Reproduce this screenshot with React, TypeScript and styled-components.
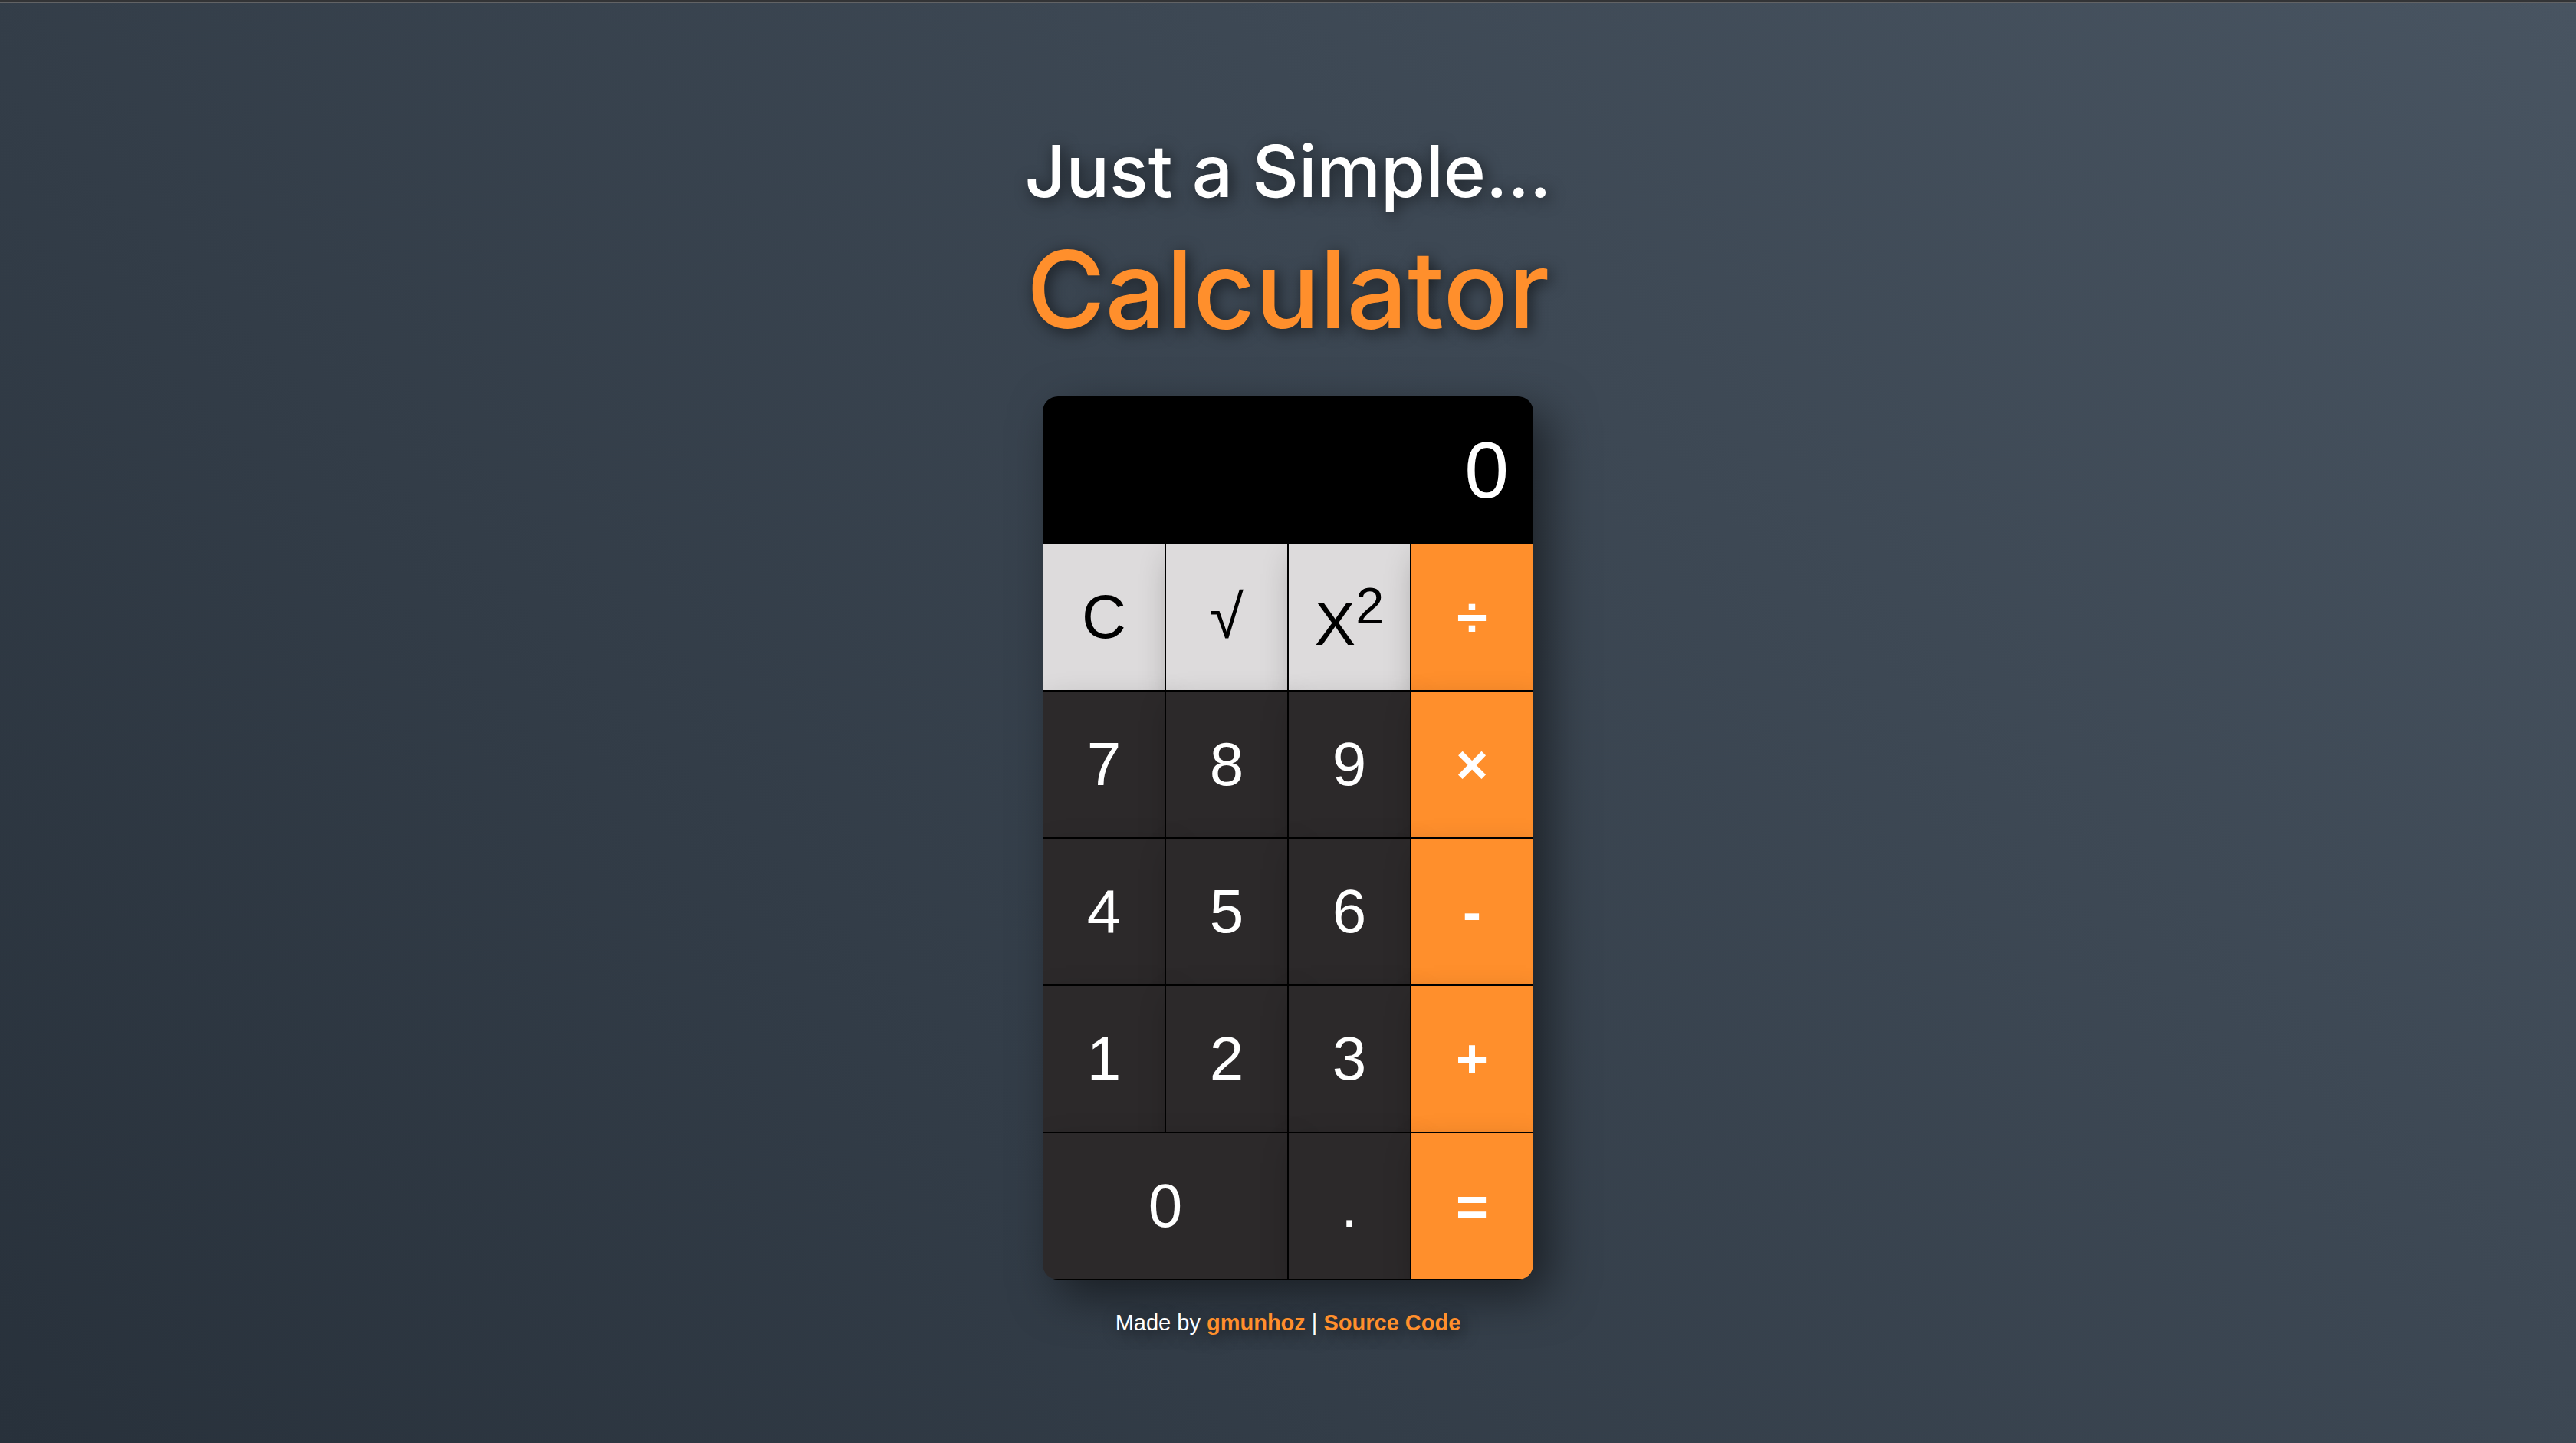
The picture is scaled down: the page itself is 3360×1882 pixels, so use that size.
import React, { useState } from "react";
import styled, { createGlobalStyle, css } from "styled-components";

const ORANGE = "#ff8f2c";

const GlobalStyle = createGlobalStyle`
  *, *::before, *::after { box-sizing: border-box; }
  html, body, #root { margin: 0; min-height: 100vh; }
  body { font-family: "Liberation Sans", Arial, sans-serif; }
`;

const Page = styled.div`
  min-height: 100vh;
  display: flex;
  flex-direction: column;
  align-items: center;
  padding: 163px 32px 64px;
  border-top: 2px solid #333436;
  box-shadow: inset 0 2px 0 #626365;
  color: #fff;
  background: linear-gradient(225deg, #485461 0%, #28313b 100%);
  background-origin: border-box;
`;

const Heading = styled.h1`
  margin: 0 0 44px;
  display: flex;
  flex-direction: column;
  align-items: center;
  font-family: Inter, sans-serif;
  font-weight: 500;
  text-shadow: 4px 4px 20px rgba(0, 0, 0, 0.6);
`;

const Lead = styled.span`
  font-size: 94px;
  line-height: 116px;
`;

const Name = styled.span`
  font-size: 140px;
  line-height: 192px;
  color: ${ORANGE};
`;

const CalculatorShadow = styled.main`
  border-radius: 20px;
  box-shadow: 20px 20px 60px rgba(0, 0, 0, 0.5);
`;

const Calculator = styled.div`
  width: 640px;
  max-width: 100%;
  display: grid;
  grid-template-columns: repeat(4, 1fr);
  grid-auto-rows: 192px;
  border-radius: 20px;
  overflow: hidden;
`;

const Display = styled.output`
  grid-column: 1 / -1;
  display: flex;
  align-items: center;
  justify-content: flex-end;
  padding: 0 32px;
  overflow: hidden;
  background: #000;
  font-size: 104px;
`;

type Tone = "digit" | "light" | "operator";

const tones = {
  digit: css`
    background: #2c292a;
    color: #fff;
    font-size: 80px;
  `,
  light: css`
    background: #dddbdc;
    color: #000;
    font-size: 80px;
  `,
  operator: css`
    background: ${ORANGE};
    color: #fff;
    font-size: 72px;
    font-weight: 700;
  `,
};

const Key = styled.button<{ $tone: Tone; $wide?: boolean }>`
  grid-column: span ${(p) => (p.$wide ? 2 : 1)};
  padding: 0;
  border: 1px solid #000;
  font-family: inherit;
  line-height: 1;
  cursor: pointer;
  box-shadow: 10px 20px 40px rgba(0, 0, 0, 0.3);
  ${(p) => tones[p.$tone]}
`;

const Footer = styled.footer`
  margin-top: 40px;
  font-size: 29px;
  line-height: 32px;
  text-shadow: 4px 4px 20px rgba(0, 0, 0, 0.6);
`;

const Link = styled.a`
  color: ${ORANGE};
  font-weight: 700;
  text-decoration: none;
`;

type KeySpec = { id: string; label: React.ReactNode; tone: Tone; wide?: boolean; name?: string };

const keys: KeySpec[] = [
  { id: "C", label: "C", tone: "light" },
  { id: "sqrt", label: "√", tone: "light", name: "Square root" },
  { id: "sq", label: <>X<sup>2</sup></>, tone: "light" },
  { id: "÷", label: "÷", tone: "operator" },
  { id: "7", label: "7", tone: "digit" },
  { id: "8", label: "8", tone: "digit" },
  { id: "9", label: "9", tone: "digit" },
  { id: "×", label: "×", tone: "operator" },
  { id: "4", label: "4", tone: "digit" },
  { id: "5", label: "5", tone: "digit" },
  { id: "6", label: "6", tone: "digit" },
  { id: "-", label: "-", tone: "operator" },
  { id: "1", label: "1", tone: "digit" },
  { id: "2", label: "2", tone: "digit" },
  { id: "3", label: "3", tone: "digit" },
  { id: "+", label: "+", tone: "operator" },
  { id: "0", label: "0", tone: "digit", wide: true },
  { id: ".", label: ".", tone: "digit" },
  { id: "=", label: "=", tone: "operator" },
];

const apply = (a: number, b: number, op: string) =>
  op === "÷" ? a / b : op === "×" ? a * b : op === "-" ? a - b : a + b;

export default function App() {
  const [value, setValue] = useState("0");
  const [stored, setStored] = useState<number | null>(null);
  const [op, setOp] = useState("");
  const [fresh, setFresh] = useState(true);

  const press = (id: string) => {
    const current = parseFloat(value);
    if (/^[0-9.]$/.test(id)) {
      if (id === "." && !fresh && value.includes(".")) return;
      setValue(fresh ? (id === "." ? "0." : id) : value + id);
      setFresh(false);
      return;
    }
    setFresh(true);
    if (id === "C") {
      setValue("0");
      setStored(null);
      setOp("");
    } else if (id === "sqrt") {
      setValue(String(Math.sqrt(current)));
    } else if (id === "sq") {
      setValue(String(current * current));
    } else {
      const result = stored !== null && op ? apply(stored, current, op) : current;
      setValue(String(result));
      setStored(id === "=" ? null : result);
      setOp(id === "=" ? "" : id);
    }
  };

  return (
    <>
      <GlobalStyle />
      <Page>
        <Heading>
          <Lead>Just a Simple...</Lead>
          <Name>Calculator</Name>
        </Heading>
        <CalculatorShadow>
          <Calculator>
            <Display>{value}</Display>
            {keys.map((k) => (
              <Key key={k.id} type="button" $tone={k.tone} $wide={k.wide} aria-label={k.name} onClick={() => press(k.id)}>
                {k.label}
              </Key>
            ))}
          </Calculator>
        </CalculatorShadow>
        <Footer>
          Made by <Link href="#gmunhoz">gmunhoz</Link> | <Link href="#source">Source Code</Link>
        </Footer>
      </Page>
    </>
  );
}
